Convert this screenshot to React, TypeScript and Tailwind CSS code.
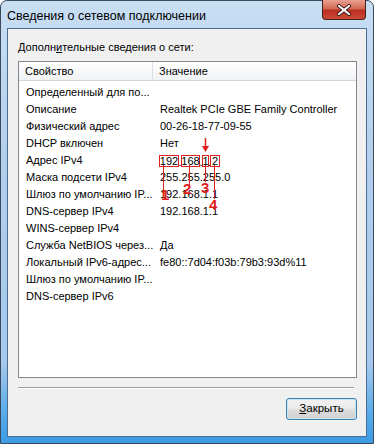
import React from "react";

const rows: [string, React.ReactNode][] = [
  ["Определенный для по...", ""],
  ["Описание", "Realtek PCIe GBE Family Controller"],
  ["Физический адрес", "00-26-18-77-09-55"],
  ["DHCP включен", "Нет"],
  ["Адрес IPv4", "ipv4"],
  ["Маска подсети IPv4", "255.255.255.0"],
  ["Шлюз по умолчанию IP...", "192.168.1.1"],
  ["DNS-сервер IPv4", "192.168.1.1"],
  ["WINS-сервер IPv4", ""],
  ["Служба NetBIOS через...", "Да"],
  ["Локальный IPv6-адрес...", "fe80::7d04:f03b:79b3:93d%11"],
  ["Шлюз по умолчанию IP...", ""],
  ["DNS-сервер IPv6", ""],
];

function Boxed({ w, children }: { w: string; children: React.ReactNode }) {
  return (
    <span className={`${w} h-[12px] border border-[#e0201c] flex items-center justify-center leading-[10px]`}>
      {children}
    </span>
  );
}

function Dot({ w }: { w: string }) {
  return <span className={`${w} flex justify-center overflow-visible leading-[10px] self-end`}>.</span>;
}

function IpValue() {
  return (
    <span className="-ml-px flex items-center h-[12px]">
      <Boxed w="w-[20px]">192</Boxed>
      <Dot w="w-[2px]" />
      <Boxed w="w-[19px]">168</Boxed>
      <Dot w="w-[2px]" />
      <Boxed w="w-[7px]">1</Boxed>
      <Dot w="w-[1px]" />
      <Boxed w="w-[10px]">2</Boxed>
    </span>
  );
}

// red markers drawn over the list
function Annotations() {
  const red = "#e0201c";
  return (
    <svg className="absolute inset-0 pointer-events-none" width={374} height={444}>
      <line x1={163.5} y1={165} x2={163.5} y2={198} stroke={red} strokeWidth={1} />
      <line x1={189.5} y1={165} x2={189.5} y2={186} stroke={red} strokeWidth={1} />
      <line x1={205.5} y1={165} x2={205.5} y2={182} stroke={red} strokeWidth={1} />
      <line x1={214.5} y1={165} x2={214.5} y2={199} stroke={red} strokeWidth={1} />
      <line x1={205.5} y1={138} x2={205.5} y2={148} stroke={red} strokeWidth={1.5} />
      <polygon points="202,146 209,146 205.5,152" fill={red} />
      <g fill={red} fontFamily="'Liberation Sans', Arial, sans-serif" fontWeight={700} fontSize={15}>
        <text x={161} y={200}>1</text>
        <text x={183} y={194}>2</text>
        <text x={201} y={193}>3</text>
        <text x={209} y={210}>4</text>
      </g>
    </svg>
  );
}

export default function App() {
  return (
    <div
      className="relative w-[374px] h-[444px] overflow-hidden bg-white text-[11px] text-black"
      style={{ fontFamily: "'Liberation Sans', Arial, sans-serif" }}
    >
      <div className="flex flex-col h-full border border-[#3a4a5c] rounded-t-[7px] px-[6px] pb-[6px] bg-[linear-gradient(180deg,#c8def3_0%,#b2cfed_35%,#a6c8ec_82%,#5aace9_93%,#3a9be4_100%)]">
        {/* Title bar */}
        <div className="h-[27px] flex items-start justify-between shrink-0">
          <span className="mt-[6px] text-[12.5px] text-black">Сведения о сетевом подключении</span>
          <div className="-mt-px mr-px w-[44px] h-[20px] rounded-b-[4px] border border-[#4a2219] border-t-0 bg-[linear-gradient(180deg,#e9a090_0%,#d46a56_45%,#bd2f22_55%,#cc4a36_100%)] flex items-center justify-center">
            <svg width="16" height="12" viewBox="0 0 16 12">
              <path d="M3 2 L13 10 M13 2 L3 10" stroke="#3a1a14" strokeWidth="4" strokeLinecap="round" />
              <path d="M3 2 L13 10 M13 2 L3 10" stroke="#ffffff" strokeWidth="2.2" strokeLinecap="round" />
            </svg>
          </div>
        </div>

        {/* Client area */}
        <div className="flex-1 flex flex-col border border-[#4b6d93] bg-[#f0f0f0]">
          <div className="mt-[11px] ml-[10px] leading-[15px]">
            Дополн<span className="underline">и</span>тельные сведения о сети:
          </div>

          <div className="mt-[6px] ml-[10px] w-[339px] h-[317px] border border-[#828790] bg-white flex flex-col">
            <div className="h-[19px] grid grid-cols-[134px_1fr] border-b border-[#d5d5d5] bg-[linear-gradient(180deg,#ffffff_0%,#f7f8fa_50%,#f1f2f4_100%)]">
              <div className="pl-[6px] flex items-center border-r border-[#dedfe2]">Свойство</div>
              <div className="pl-[6px] flex items-center">Значение</div>
            </div>
            <div className="pt-[3px] flex flex-col">
              {rows.map(([name, value], i) => (
                <div key={i} className="h-[17px] grid grid-cols-[134px_1fr] items-center whitespace-nowrap">
                  <div className="pl-[7px]">{name}</div>
                  <div className="pl-[7px]">{value === "ipv4" ? <IpValue /> : value}</div>
                </div>
              ))}
            </div>
          </div>

          <div className="mt-[9px] ml-[10px] w-[336px] border-t border-[#a0a0a0] border-b border-b-white" />

          <div className="mt-[9px] mr-[9px] flex justify-end">
            <button className="w-[71px] h-[22px] rounded-[3px] border border-[#3c7fb1] bg-[linear-gradient(180deg,#f3f3f3_0%,#ebebeb_45%,#dddddd_55%,#d0d0d0_100%)] shadow-[inset_0_0_0_1px_#c6e6f8] text-[11.5px]">
              <span className="underline">З</span>акрыть
            </button>
          </div>
        </div>
      </div>
      <Annotations />
    </div>
  );
}
